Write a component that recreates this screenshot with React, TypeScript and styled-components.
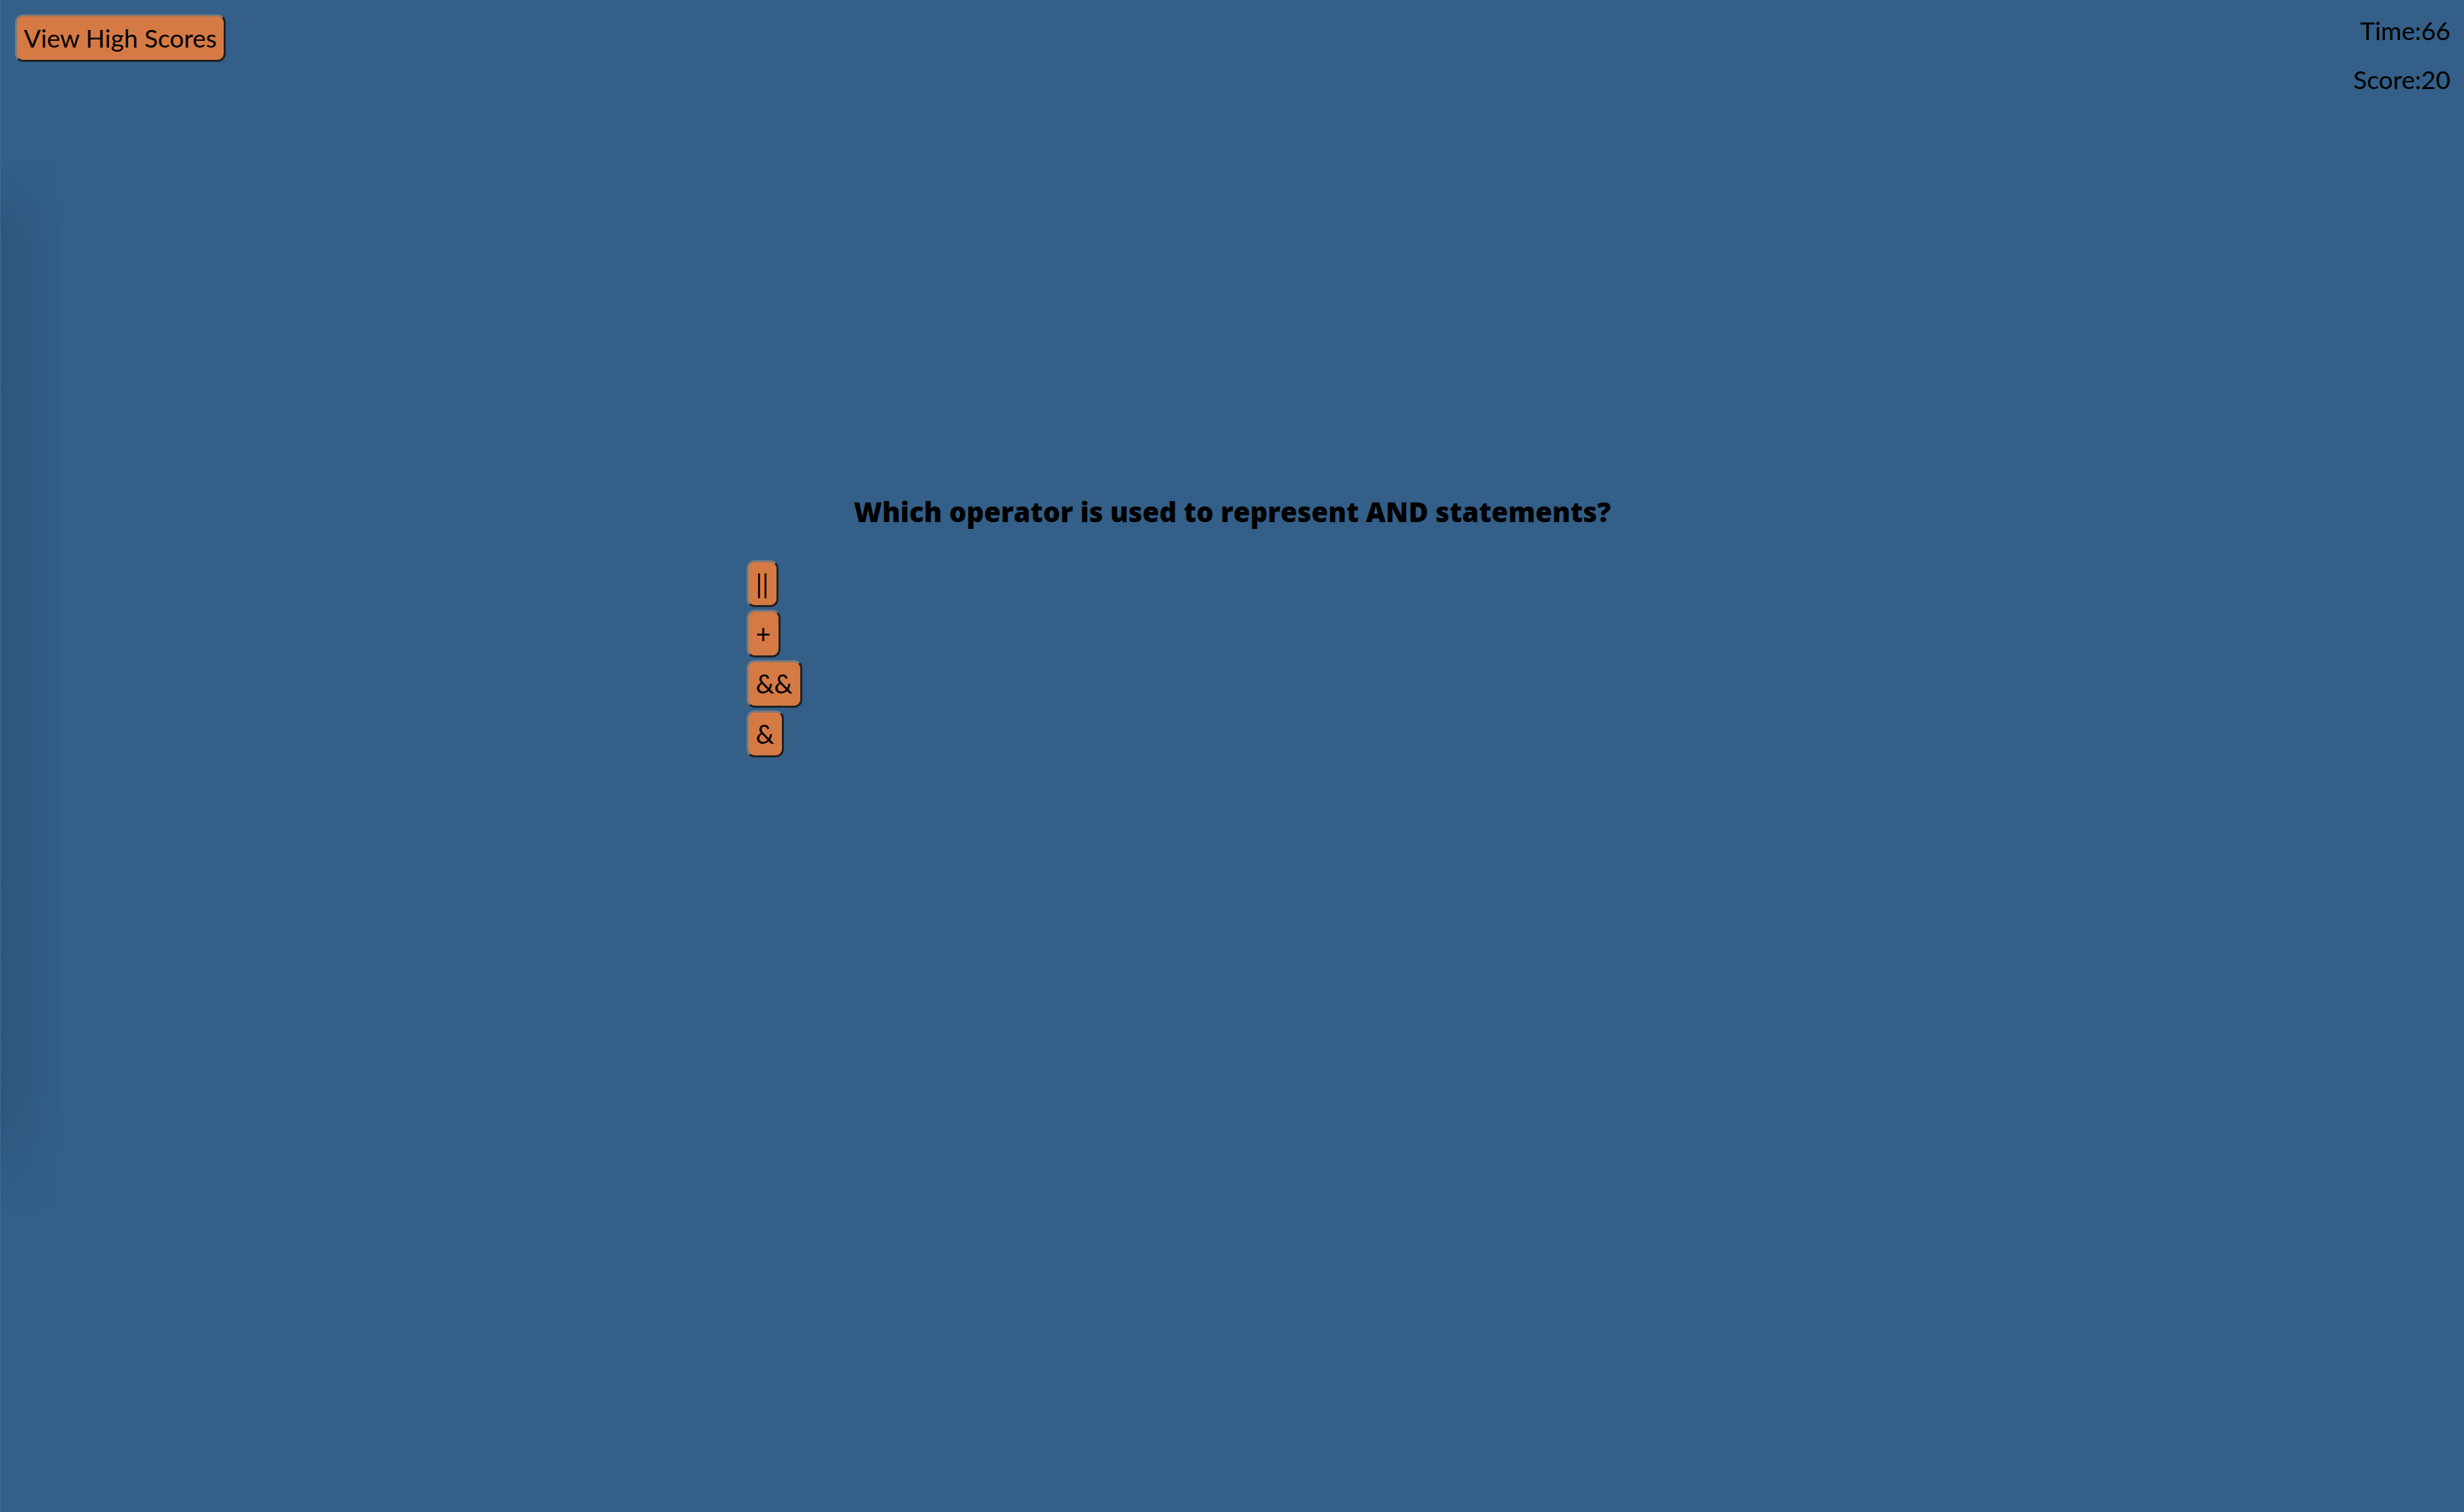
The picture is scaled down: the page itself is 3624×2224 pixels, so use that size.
import React from "react";
import styled, { createGlobalStyle } from "styled-components";

const GlobalStyle = createGlobalStyle`
  html, body {
    margin: 0;
    padding: 0;
    background: #335f88;
  }
  body {
    min-height: 100vh;
    font-family: "Lato", "Open Sans", sans-serif;
    color: #000;
  }
`;

const Page = styled.div`
  position: relative;
  min-height: 100vh;
  background: #335f88;
  border-left: 1px solid #3f6d97;
  box-sizing: border-box;
`;

const EdgeShade = styled.div`
  position: absolute;
  left: 0;
  top: 230px;
  width: 90px;
  height: 1560px;
  background: linear-gradient(to right, rgba(20, 40, 70, 0.16), rgba(20, 40, 70, 0));
  -webkit-mask-image: linear-gradient(to bottom, transparent, #000 8%, #000 88%, transparent);
  mask-image: linear-gradient(to bottom, transparent, #000 8%, #000 88%, transparent);
  pointer-events: none;
`;

const TopBar = styled.header`
  display: flex;
  justify-content: space-between;
  align-items: flex-start;
  padding: 21px 20px 0 21px;
`;

const OrangeButton = styled.button`
  font-family: "Lato", "Open Sans", sans-serif;
  font-size: 37px;
  line-height: 1.2;
  color: #000;
  background: #d67a45;
  border: 3px solid #222;
  border-top-color: #7a7a7a;
  border-left-color: #7a7a7a;
  border-radius: 12px;
  padding: 10px 10px;
  cursor: pointer;
  text-align: left;
`;

const Stats = styled.div`
  display: flex;
  flex-direction: column;
  align-items: flex-end;
  gap: 28px;
  font-size: 37px;
  line-height: 1.2;
  margin-top: 2px;
`;

const Stat = styled.div``;

const Quiz = styled.main`
  width: 1430px;
  margin: 587px auto 0;
`;

const Question = styled.h2`
  margin: 0 0 45px;
  text-align: center;
  font-family: "Open Sans", "Lato", sans-serif;
  font-weight: 800;
  font-size: 40px;
  line-height: 1.3;
`;

const Answers = styled.div`
  display: flex;
  flex-direction: column;
  align-items: flex-start;
  gap: 4px;
`;

const AnswerButton = styled(OrangeButton)`
  font-size: 38px;
  padding: 9px 11px;
`;

const answers = ["||", "+", "&&", "&"];

export default function App() {
  return (
    <>
      <GlobalStyle />
      <Page>
        <EdgeShade />
        <TopBar>
          <OrangeButton>View High Scores</OrangeButton>
          <Stats>
            <Stat>Time:66</Stat>
            <Stat>Score:20</Stat>
          </Stats>
        </TopBar>
        <Quiz>
          <Question>Which operator is used to represent AND statements?</Question>
          <Answers>
            {answers.map((a) => (
              <AnswerButton key={a}>{a}</AnswerButton>
            ))}
          </Answers>
        </Quiz>
      </Page>
    </>
  );
}
